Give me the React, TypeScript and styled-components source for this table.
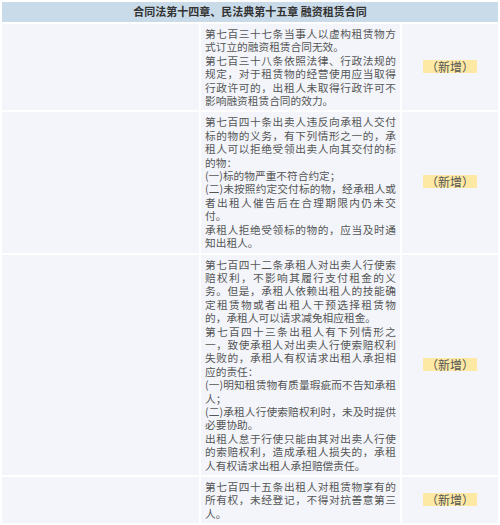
import styled, { createGlobalStyle } from 'styled-components';

const GlobalStyle = createGlobalStyle`
  html, body {
    margin: 0;
    padding: 0;
    background: #ffffff;
  }
  body {
    font-family: "Noto Sans CJK SC", "Liberation Sans", sans-serif;
  }
`;

const rows: string[][] = [
  [
    '第七百三十七条当事人以虚构租赁物方式订立的融资租赁合同无效。',
    '第七百三十八条依照法律、行政法规的规定，对于租赁物的经营使用应当取得行政许可的，出租人未取得行政许可不影响融资租赁合同的效力。',
  ],
  [
    '第七百四十条出卖人违反向承租人交付标的物的义务，有下列情形之一的，承租人可以拒绝受领出卖人向其交付的标的物：',
    '(一)标的物严重不符合约定；',
    '(二)未按照约定交付标的物，经承租人或者出租人催告后在合理期限内仍未交付。',
    '承租人拒绝受领标的物的，应当及时通知出租人。',
  ],
  [
    '第七百四十二条承租人对出卖人行使索赔权利，不影响其履行支付租金的义务。但是，承租人依赖出租人的技能确定租赁物或者出租人干预选择租赁物的，承租人可以请求减免相应租金。',
    '第七百四十三条出租人有下列情形之一，致使承租人对出卖人行使索赔权利失败的，承租人有权请求出租人承担相应的责任：',
    '(一)明知租赁物有质量瑕疵而不告知承租人；',
    '(二)承租人行使索赔权利时，未及时提供必要协助。',
    '出租人怠于行使只能由其对出卖人行使的索赔权利，造成承租人损失的，承租人有权请求出租人承担赔偿责任。',
  ],
  ['第七百四十五条出租人对租赁物享有的所有权，未经登记，不得对抗善意第三人。'],
];

const App = () => {
  return (
    <>
      <GlobalStyle />
      <CompareTable>
        <colgroup>
          <col style={{ width: 197 }} />
          <col style={{ width: 199 }} />
          <col style={{ width: 96 }} />
        </colgroup>
        <thead>
          <tr>
            <HeadCell colSpan={3}>合同法第十四章、民法典第十五章 融资租赁合同</HeadCell>
          </tr>
        </thead>
        <tbody>
          {rows.map((paras, i) => (
            <tr key={i}>
              <Cell />
              <TextCell>
                {paras.map((p, j) => (
                  <Para key={j}>{p}</Para>
                ))}
              </TextCell>
              <TagCell>
                <NewTag>（新增）</NewTag>
              </TagCell>
            </tr>
          ))}
        </tbody>
      </CompareTable>
    </>
  );
};

const CompareTable = styled.table`
  width: 500px;
  table-layout: fixed;
  border-collapse: separate;
  border-spacing: 2px;
  font-size: 10.7px;
  line-height: 13.4px;
  color: #555555;
`;

const HeadCell = styled.th`
  height: 20px;
  padding: 0;
  background: #c9dbe9;
  color: #333333;
  font-weight: bold;
  font-size: 11px;
  text-align: center;
  vertical-align: middle;
`;

const Cell = styled.td`
  background: #f3f5fb;
  padding: 3px 4px;
  vertical-align: middle;
`;

const TextCell = styled(Cell)`
  text-align: justify;
  vertical-align: top;
`;

const TagCell = styled(Cell)`
  text-align: center;
`;

const Para = styled.p`
  margin: 0;
`;

const NewTag = styled.span`
  display: inline-block;
  background: #fde9a4;
  font-size: 12px;
  line-height: 13px;
  padding: 0 3px;
  color: #555555;
`;

export default App;
